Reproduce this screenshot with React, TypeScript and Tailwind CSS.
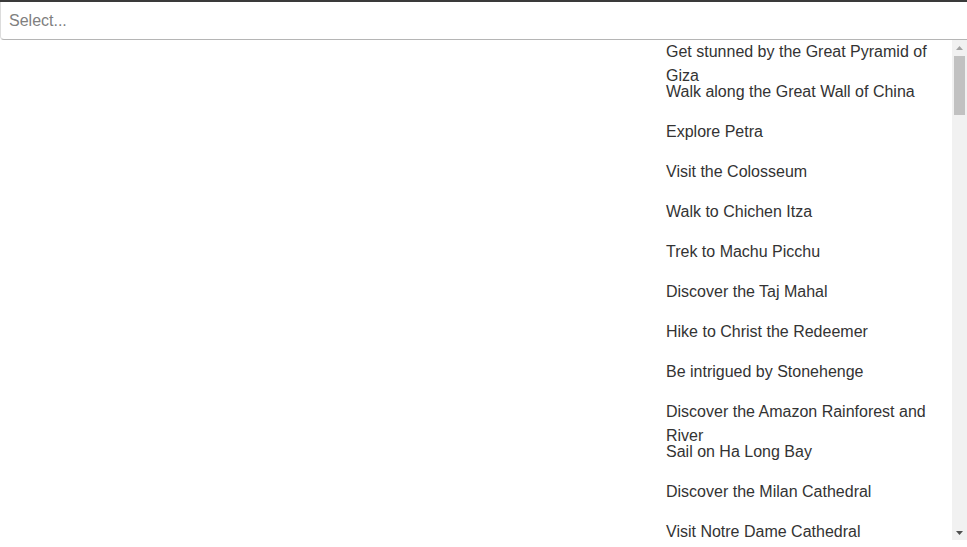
import React from "react";

const items = [
  "Get stunned by the Great Pyramid of Giza",
  "Walk along the Great Wall of China",
  "Explore Petra",
  "Visit the Colosseum",
  "Walk to Chichen Itza",
  "Trek to Machu Picchu",
  "Discover the Taj Mahal",
  "Hike to Christ the Redeemer",
  "Be intrigued by Stonehenge",
  "Discover the Amazon Rainforest and River",
  "Sail on Ha Long Bay",
  "Discover the Milan Cathedral",
  "Visit Notre Dame Cathedral",
];

export default function App() {
  return (
    <div className="w-[967px] h-[547px] bg-white overflow-hidden font-['Liberation_Sans',Arial,sans-serif]">
      <div className="h-[2px] bg-[#3a3a3a]" />
      <div className="h-[38px] border-l border-b border-[#b5b5b5] border-l-[#dcdcdc] rounded-bl-[4px] flex items-center pl-[8px] text-[16px] text-[#808080]">
        Select...
      </div>
      <div className="flex justify-end h-[500px]">
        <div className="w-[301px] overflow-hidden">
          {items.map((t) => (
            <div key={t} className="h-[40px] pl-[15px] pr-4 text-[16px] leading-[24px] text-[#333]">
              {t}
            </div>
          ))}
        </div>
        <div className="w-[15px] bg-[#f1f1f1] flex flex-col items-center">
          <div className="h-[15px] flex items-center justify-center">
            <svg width="7" height="4" viewBox="0 0 7 4">
              <path d="M0 4 L3.5 0 L7 4 Z" fill="#a3a3a3" />
            </svg>
          </div>
          <div className="w-[11px] h-[59px] bg-[#c1c1c1] mt-[1px]" />
          <div className="flex-1" />
          <div className="h-[15px] flex items-center justify-center">
            <svg width="7" height="4" viewBox="0 0 7 4">
              <path d="M0 0 L7 0 L3.5 4 Z" fill="#505050" />
            </svg>
          </div>
        </div>
      </div>
    </div>
  );
}
